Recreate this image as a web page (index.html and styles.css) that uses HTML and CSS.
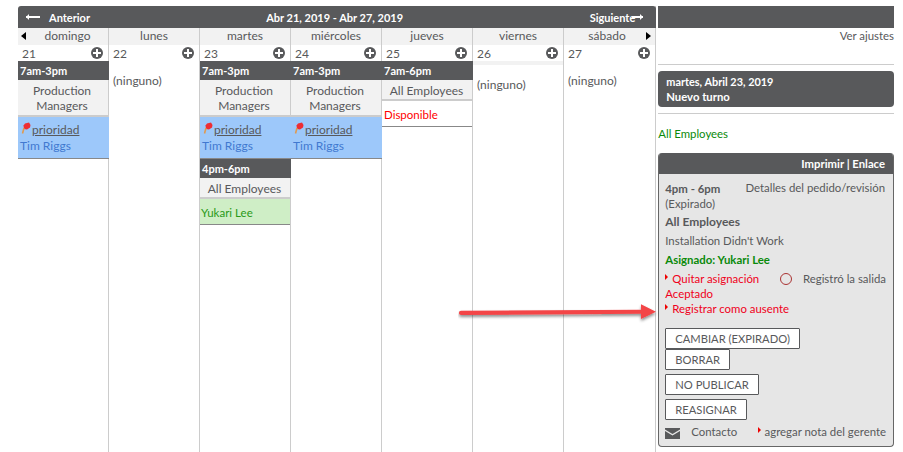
FILE: index.html
```html
<!DOCTYPE html>
<html lang="es">
<head>
<meta charset="utf-8">
<title>Calendario</title>
<link rel="stylesheet" href="styles.css">
</head>
<body>
<div class="page">
  <main class="calendar">
    <header class="cal-head">
      <span class="nav"><span class="arrow-l"></span>Anterior</span>
      <span class="range">Abr 21, 2019 - Abr 27, 2019</span>
      <span class="nav next">Siguiente<span class="arrow-r"></span></span>
    </header>
    <div class="days">
      <div class="day first"><span class="tri-l"></span>domingo</div>
      <div class="day">lunes</div>
      <div class="day">martes</div>
      <div class="day">miércoles</div>
      <div class="day">jueves</div>
      <div class="day">viernes</div>
      <div class="day last">sábado<span class="tri-r"></span></div>
    </div>
    <div class="cols">
      <section class="col">
        <div class="num"><span>21</span><i class="plus"></i></div>
        <div class="shift">7am-3pm</div>
        <div class="group">Production Managers</div>
        <div class="slot blue"><svg class="pin" viewBox="0 0 10 13"><path d="M4 1.5 8 .5 9.5 3 9 5.5 6 7.5 3 7 2.5 3.5Z" fill="#ee2d33"/><path d="M3 6 1.5 11.5" stroke="#e09a50" stroke-width="1.6" fill="none"/></svg><a class="prio">prioridad</a><div class="who">Tim Riggs</div></div>
      </section>
      <section class="col">
        <div class="num"><span>22</span><i class="plus"></i></div>
        <div class="none">(ninguno)</div>
      </section>
      <section class="col">
        <div class="num"><span>23</span><i class="plus"></i></div>
        <div class="shift">7am-3pm</div>
        <div class="group">Production Managers</div>
        <div class="slot blue"><svg class="pin" viewBox="0 0 10 13"><path d="M4 1.5 8 .5 9.5 3 9 5.5 6 7.5 3 7 2.5 3.5Z" fill="#ee2d33"/><path d="M3 6 1.5 11.5" stroke="#e09a50" stroke-width="1.6" fill="none"/></svg><a class="prio">prioridad</a><div class="who">Tim Riggs</div></div>
        <div class="shift">4pm-6pm</div>
        <div class="group single">All Employees</div>
        <div class="slot green">Yukari Lee</div>
      </section>
      <section class="col">
        <div class="num"><span>24</span><i class="plus"></i></div>
        <div class="shift">7am-3pm</div>
        <div class="group">Production Managers</div>
        <div class="slot blue"><svg class="pin" viewBox="0 0 10 13"><path d="M4 1.5 8 .5 9.5 3 9 5.5 6 7.5 3 7 2.5 3.5Z" fill="#ee2d33"/><path d="M3 6 1.5 11.5" stroke="#e09a50" stroke-width="1.6" fill="none"/></svg><a class="prio">prioridad</a><div class="who">Tim Riggs</div></div>
      </section>
      <section class="col">
        <div class="num"><span>25</span><i class="plus"></i></div>
        <div class="shift">7am-6pm</div>
        <div class="group single">All Employees</div>
        <div class="slot open">Disponible</div>
      </section>
      <section class="col">
        <div class="num"><span>26</span><i class="plus"></i></div>
        <div class="strip"></div>
        <div class="none">(ninguno)</div>
      </section>
      <section class="col">
        <div class="num"><span>27</span><i class="plus"></i></div>
        <div class="none">(ninguno)</div>
      </section>
    </div>
  </main>
  <aside class="side">
    <div class="side-top"></div>
    <div class="settings">Ver ajustes</div>
    <hr class="rule">
    <div class="newshift">
      <div>martes, Abril 23, 2019</div>
      <div class="title">Nuevo turno</div>
    </div>
    <hr class="rule tight">
    <div class="grouplink">All Employees</div>
    <div class="panel">
      <div class="panel-head">Imprimir | Enlace</div>
      <div class="panel-body">
        <div class="times">
          <div><div class="strong">4pm - 6pm</div><div>(Expirado)</div></div>
          <div class="details">Detalles del pedido/revisión</div>
        </div>
        <div class="line strong team">All Employees</div>
        <div class="line">Installation Didn't Work</div>
        <div class="line assigned">Asignado: Yukari Lee</div>
        <div class="status">
          <span class="red"><i class="mark"></i>Quitar asignación</span>
          <span class="ring"></span>
          <span class="out">Registró la salida</span>
        </div>
        <div class="red acc">Aceptado</div>
        <div class="red acc"><i class="mark"></i>Registrar como ausente</div>
        <div class="buttons">
          <button class="btn">CAMBIAR (EXPIRADO)</button>
          <button class="btn">BORRAR</button>
          <button class="btn gap">NO PUBLICAR</button>
          <button class="btn gap">REASIGNAR</button>
        </div>
        <div class="foot">
          <svg class="mail" viewBox="0 0 15 11"><path d="M0 0H15V1.5L7.5 6 0 1.5Z" fill="#58595b"/><path d="M0 3 7.5 7.5 15 3V11H0Z" fill="#58595b"/></svg>
          <span class="contact">Contacto</span>
          <span class="note"><i class="mark"></i>agregar nota del gerente</span>
        </div>
      </div>
    </div>
  </aside>
</div>
<svg class="callout" viewBox="0 0 210 24" aria-hidden="true">
  <defs><filter id="sh" x="-5%" y="-50%" width="110%" height="220%"><feDropShadow dx="0" dy="2" stdDeviation="1.5" flood-color="#000" flood-opacity=".45"/></filter></defs>
  <path filter="url(#sh)" d="M3 8.8 183 7.8V2.2L198 9.7 183 17V11.8L3 13A2 2 0 0 1 3 8.8Z" fill="#f34547"/>
</svg>
</body>
</html>
```
FILE: styles.css
```css
* { box-sizing: border-box; }
html, body { margin: 0; padding: 0; }
body {
  width: 903px;
  height: 452px;
  overflow: hidden;
  position: relative;
  background: #fff;
  color: #58595b;
  font: 12px/15px "Lato", "Open Sans", sans-serif;
}
.page { display: flex; padding: 6px 9px 0 18px; align-items: stretch; height: 452px; }
.calendar { width: 639px; display: flex; flex-direction: column; border-right: 1px solid #ccc; }

.cal-head {
  height: 22px;
  margin-right: -1px;
  background: #58595b;
  color: #fff;
  border-radius: 3px 3px 0 0;
  display: grid;
  grid-template-columns: 1fr auto 1fr;
  align-items: center;
  padding: 0 13px 0 8px;
  font-size: 11px;
  font-weight: 700;
}
.nav { display: flex; align-items: center; }
.next { justify-content: flex-end; }
.arrow-l, .arrow-r { position: relative; display: block; height: 2px; background: #fff; }
.arrow-l { width: 14px; margin-right: 9px; }
.arrow-r { width: 11px; margin-left: -3px; }
.arrow-l::before, .arrow-r::before {
  content: "";
  position: absolute;
  top: -2px;
  border: 3px solid transparent;
}
.arrow-l::before { left: -3px; border-right-color: #fff; }
.arrow-r::before { right: -3px; border-left-color: #fff; }

.days { display: grid; grid-template-columns: repeat(7, 91px); height: 17px; background: #f2f2f2; }
.day { position: relative; text-align: center; border-right: 1px solid #ccc; line-height: 15px; }
.day.first { padding-left: 9px; }
.day.last { border-right: 0; padding-right: 5px; }
.tri-l, .tri-r { position: absolute; top: 4px; border: 4px solid transparent; }
.tri-l { left: 3px; border-left: 0; border-right: 5px solid #000; }
.tri-r { right: 4px; border-right: 0; border-left: 5px solid #000; }

.cols { flex: 1; display: grid; grid-template-columns: repeat(7, 91px); }
.col { border-right: 1px solid #ccc; min-width: 0; }
.col:last-child { border-right: 0; }
.num { height: 16px; display: flex; justify-content: space-between; align-items: center; padding: 0 5px 0 4px; }
.plus {
  position: relative;
  display: block;
  width: 12px;
  height: 12px;
  border-radius: 50%;
  background: #58595b;
}
.plus::before, .plus::after { content: ""; position: absolute; background: #fff; }
.plus::before { left: 2px; top: 5px; width: 8px; height: 2px; }
.plus::after { left: 5px; top: 2px; width: 2px; height: 8px; }

.shift { height: 19px; background: #58595b; color: #fff; font-size: 11px; font-weight: 700; line-height: 19px; padding-left: 2px; margin-right: -1px; }
.group { background: #f2f2f2; border-bottom: 2px solid #ccc; text-align: center; padding: 3px 6px 2px 4px; height: 37px; }
.group.single { height: 21px; padding: 3px 3px 0 2px; white-space: nowrap; }
.slot { border-bottom: 1px solid #888; padding: 0 2px; }
.blue { background: #9dc8fa; height: 42px; padding-top: 5px; margin-right: -1px; }
.green { background: #cfeec6; color: #2a9a18; height: 26px; line-height: 27px; font-size: 11.5px; padding-left: 1px; }
.open { color: #f00; height: 26px; line-height: 27px; font-size: 11.5px; }
.pin { width: 10px; height: 13px; vertical-align: -1px; margin: 0 1px; }
.prio { color: #58595b; text-decoration: underline; }
.who { color: #4179d0; margin-top: 1px; }
.none { padding: 12px 4px 0; }
.strip { height: 4px; background: #f2f2f2; }

.side { width: 236px; margin-left: 2px; font-size: 11.4px; }
.side-top { height: 22px; background: #58595b; }
.settings { text-align: right; line-height: 16px; }
.rule { border: 0; border-top: 1px solid #ccc; margin: 20px 0 6px; }
.rule.tight { margin: 6px 0 12px; }
.newshift {
  height: 36px;
  background: #58595b;
  color: #fff;
  border-radius: 4px;
  padding: 3px 8px;
  font-size: 10.9px;
  font-weight: 700;
}
.title { font-size: 11.3px; }
.strong { font-weight: 700; }
.team { font-size: 12px; }
.grouplink { color: #0a8a0a; margin-bottom: 12px; }
.panel { border-radius: 4px; overflow: hidden; height: 294px; border: 1px solid #666; border-top: 0; background: #e6e6e6; }
.panel-head { height: 21px; margin: 0 -1px; background: #58595b; color: #fff; font-size: 11.3px; font-weight: 700; text-align: right; line-height: 21px; padding-right: 9px; }
.panel-body { padding: 7px 6px 0 6px; }
.times { display: flex; justify-content: space-between; }
.details { padding-right: 2px; margin-top: -1px; }
.line { margin-top: 4px; line-height: 15px; }
.line.team { margin-top: 3px; }
.assigned { color: #0a8a0a; font-weight: 700; }
.red { color: #f00020; }
.status { display: flex; align-items: center; margin-top: 4px; white-space: nowrap; }
.mark {
  display: inline-block;
  border: 3px solid transparent;
  border-left: 3px solid #e00;
  border-right: 0;
  margin: 0 4px 3px 0;
}
.ring { width: 12px; height: 12px; border: 1px solid #a33; border-radius: 50%; margin: 0 11px 0 auto; }
.out { padding-right: 1px; }
.acc { line-height: 15px; }
.buttons { margin: 12px 0 0; display: flex; flex-direction: column; align-items: flex-start; }
.btn {
  height: 21px;
  padding: 0 9px;
  border: 1px solid #58595b;
  border-radius: 1px;
  background: #fff;
  color: #58595b;
  font: 11.2px/19px "Lato", sans-serif;
}
.btn.gap { margin-top: 4px; }
.foot { display: flex; align-items: center; margin-top: 4px; }
.mail { width: 15px; height: 11px; margin-top: 3px; }
.contact { margin-left: 11px; }
.note { margin-left: auto; padding-right: 1px; }

.callout { position: absolute; left: 458px; top: 302px; width: 210px; height: 24px; }
```
